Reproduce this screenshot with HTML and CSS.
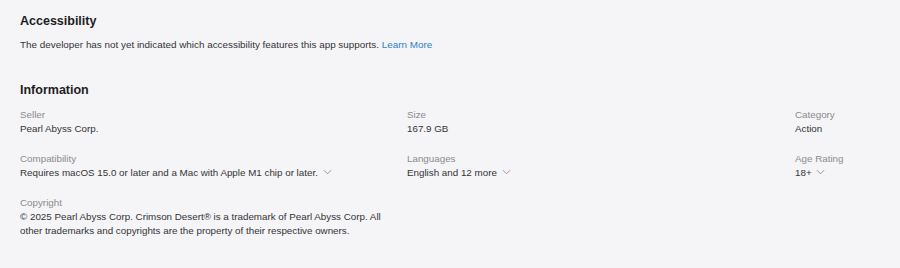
FILE: index.html
```html
<!DOCTYPE html>
<html lang="en">
<head>
    <meta charset="UTF-8">
    <meta name="viewport" content="width=device-width, initial-scale=1.0">
    <title>App Information</title>
    <link rel="stylesheet" href="styles.css">
</head>
<body>
    <div class="page">
        <div class="section">
            <h2>Accessibility</h2>
            <p class="note">The developer has not yet indicated which accessibility features this app supports. <a href="#">Learn More</a></p>
        </div>

        <div class="section info">
            <h2>Information</h2>
            <div class="info-grid">
                <div class="item">
                    <div class="label">Seller</div>
                    <div class="value">Pearl Abyss Corp.</div>
                </div>
                <div class="item">
                    <div class="label">Size</div>
                    <div class="value">167.9 GB</div>
                </div>
                <div class="item">
                    <div class="label">Category</div>
                    <div class="value">Action</div>
                </div>
                <div class="item">
                    <div class="label">Compatibility</div>
                    <div class="value">Requires macOS 15.0 or later and a Mac with Apple M1 chip or later.
                        <svg class="chev" viewBox="0 0 10 6"><path d="M1 1l4 4 4-4"/></svg>
                    </div>
                </div>
                <div class="item">
                    <div class="label">Languages</div>
                    <div class="value">English and 12 more
                        <svg class="chev" viewBox="0 0 10 6"><path d="M1 1l4 4 4-4"/></svg>
                    </div>
                </div>
                <div class="item">
                    <div class="label">Age Rating</div>
                    <div class="value">18+
                        <svg class="chev" viewBox="0 0 10 6"><path d="M1 1l4 4 4-4"/></svg>
                    </div>
                </div>
                <div class="item wide">
                    <div class="label">Copyright</div>
                    <div class="value">© 2025 Pearl Abyss Corp. Crimson Desert® is a trademark of Pearl Abyss Corp. All other trademarks and copyrights are the property of their respective owners.</div>
                </div>
            </div>
        </div>
    </div>
</body>
</html>
```

FILE: styles.css
```css
html, body {
    margin: 0;
    background-color: #f5f5f7;
}
body {
    font-family: "Liberation Sans", Arial, sans-serif;
    color: #333336;
    -webkit-font-smoothing: antialiased;
}
.page {
    padding: 12px 20px 0 20px;
}
h2 {
    margin: 0;
    font-size: 12.5px;
    line-height: 18px;
    font-weight: bold;
    color: #1d1d1f;
}
.note {
    margin: 8px 0 0 0;
    font-size: 9.9px;
    line-height: 14px;
}
.note a {
    color: #2f7fc8;
    text-decoration: none;
}
.info {
    margin-top: 29px;
}
.info-grid {
    display: grid;
    grid-template-columns: 387px 388px 1fr;
    row-gap: 16px;
    margin-top: 9px;
}
.item.wide {
    grid-column: 1 / 2;
    width: 372px;
}
.label {
    font-size: 9.8px;
    line-height: 14px;
    color: #8a8a8e;
}
.value {
    font-size: 9.8px;
    line-height: 14px;
    color: #333336;
}
.chev {
    width: 9px;
    height: 6px;
    margin-left: 2px;
    fill: none;
    stroke: #8a8a8e;
    stroke-width: 1;
    vertical-align: 1px;
}
```
